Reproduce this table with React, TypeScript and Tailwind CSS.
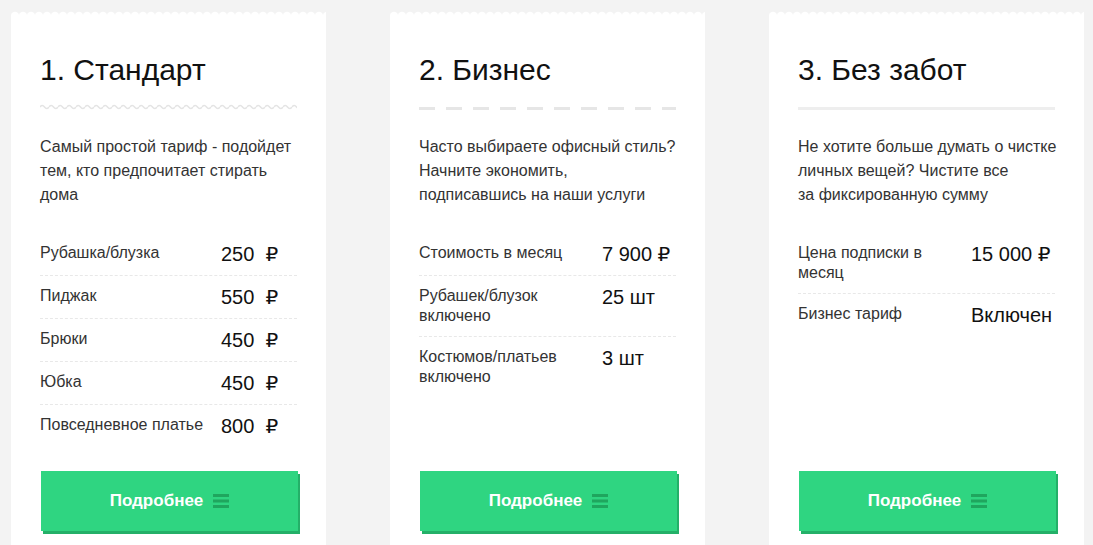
import React from "react";

type Row = { label: React.ReactNode; value: string };
type Plan = {
  title: string;
  divider: "wave" | "dash" | "solid";
  desc: React.ReactNode;
  valueW: string;
  rows: Row[];
};

const plans: Plan[] = [
  {
    title: "1. Стандарт",
    divider: "wave",
    desc: (
      <>
        Самый простой тариф - подойдет
        <br />
        тем, кто предпочитает стирать
        <br />
        дома
      </>
    ),
    valueW: "w-[76px]",
    rows: [
      { label: "Рубашка/блузка", value: "250  ₽" },
      { label: "Пиджак", value: "550  ₽" },
      { label: "Брюки", value: "450  ₽" },
      { label: "Юбка", value: "450  ₽" },
      { label: "Повседневное платье", value: "800  ₽" },
    ],
  },
  {
    title: "2. Бизнес",
    divider: "dash",
    desc: (
      <>
        Часто выбираете офисный стиль?
        <br />
        Начните экономить,
        <br />
        подписавшись на наши услуги
      </>
    ),
    valueW: "w-[74px]",
    rows: [
      { label: "Стоимость в месяц", value: "7 900 ₽" },
      { label: "Рубашек/блузок включено", value: "25 шт" },
      { label: "Костюмов/платьев включено", value: "3 шт" },
    ],
  },
  {
    title: "3. Без забот",
    divider: "solid",
    desc: (
      <>
        Не хотите больше думать о чистке
        <br />
        личных вещей? Чистите все
        <br />
        за фиксированную сумму
      </>
    ),
    valueW: "w-[84px]",
    rows: [
      { label: "Цена подписки в месяц", value: "15 000 ₽" },
      { label: "Бизнес тариф", value: "Включен" },
    ],
  },
];

function Scallop({ id }: { id: string }) {
  return (
    <svg className="block w-full h-[5px] shrink-0" aria-hidden>
      <defs>
        <pattern id={id} width="8" height="5" patternUnits="userSpaceOnUse">
          <circle cx="4" cy="5" r="4.2" fill="#ffffff" />
        </pattern>
      </defs>
      <rect width="100%" height="5" fill={`url(#${id})`} />
    </svg>
  );
}

function Divider({ kind, id }: { kind: Plan["divider"]; id: string }) {
  if (kind === "solid") return <div className="h-[3px] w-full bg-[#eeeeee]" />;
  if (kind === "dash")
    return (
      <svg className="block w-full h-[3px]" aria-hidden>
        <line x1="0" y1="1.5" x2="100%" y2="1.5" stroke="#e6e6e6" strokeWidth="3" strokeDasharray="16 11" />
      </svg>
    );
  return (
    <svg className="block w-full h-[6px]" aria-hidden>
      <defs>
        <pattern id={id} width="9" height="6" patternUnits="userSpaceOnUse">
          <path d="M0 3 Q2.25 0 4.5 3 T9 3" fill="none" stroke="#e4e4e4" strokeWidth="1.6" />
        </pattern>
      </defs>
      <rect width="100%" height="6" fill={`url(#${id})`} />
    </svg>
  );
}

function Card({ plan, i }: { plan: Plan; i: number }) {
  return (
    <div className="w-[315px] shrink-0 flex flex-col">
      <Scallop id={`sc${i}`} />
      <div className="bg-white h-[560px] shrink-0 px-[29px] pt-[37px] pb-[45px] flex flex-col">
        <h2 className="text-[30px] leading-[34px] text-[#111111] font-normal">{plan.title}</h2>
        <div className="mt-[17px] h-[6px] flex items-end">
          <Divider kind={plan.divider} id={`dv${i}`} />
        </div>
        <p className="mt-[25px] text-[16px] leading-[24px] text-[#333333] whitespace-nowrap">{plan.desc}</p>
        <div className="mt-[26px] flex-1">
          {plan.rows.map((r, k) => (
            <div
              key={k}
              className={`flex items-start py-[10px] ${k < plan.rows.length - 1 ? "border-b border-dashed border-[#e8e8e8]" : ""}`}
            >
              <div className="flex-1 pr-3 text-[16px] leading-[20px] text-[#333333]">{r.label}</div>
              <div className={`${plan.valueW} shrink-0 text-[20px] leading-[22px] text-[#111111] whitespace-pre`}>
                {r.value}
              </div>
            </div>
          ))}
        </div>
        <button className="h-[60px] shrink-0 w-full ml-[1px] bg-[#2fd581] shadow-[2px_3px_0_#24b068] flex items-center justify-center gap-[10px] text-white text-[17px] font-bold">
          <span>Подробнее</span>
          <svg width="16" height="14" viewBox="0 0 16 14" aria-hidden>
            <rect x="0" y="0" width="16" height="3" fill="#1fa65e" />
            <rect x="0" y="5.5" width="16" height="3" fill="#1fa65e" />
            <rect x="0" y="11" width="16" height="3" fill="#1fa65e" />
          </svg>
        </button>
      </div>
    </div>
  );
}

export default function App() {
  return (
    <div
      className="w-[1093px] h-[545px] overflow-hidden bg-[#f3f3f3] flex gap-[64px] pl-[11px] pt-[11px]"
      style={{ fontFamily: '"Liberation Sans", Arial, "DejaVu Sans", sans-serif' }}
    >
      {plans.map((p, i) => (
        <Card key={i} plan={p} i={i} />
      ))}
    </div>
  );
}
